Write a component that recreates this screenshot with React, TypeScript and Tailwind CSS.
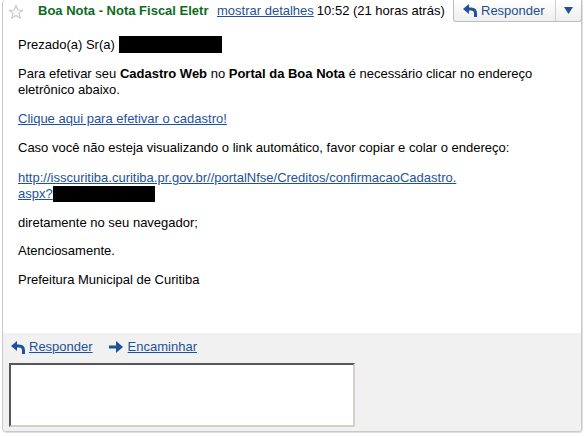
import React from "react";

const ReplyIcon = () => (
  <svg width="14" height="13" viewBox="0 0 14 13" className="shrink-0">
    <polygon points="0,5 6,0 6,10" fill="#1d5298" />
    <path d="M5 5 H8 Q12.5 5 12.5 9.5 V13" stroke="#1d5298" strokeWidth="3" fill="none" />
  </svg>
);

const ForwardIcon = () => (
  <svg width="14" height="12" viewBox="0 0 14 12" className="shrink-0">
    <path d="M0 6 H9" stroke="#1d5298" strokeWidth="3" fill="none" />
    <polygon points="7,0 14,6 7,12" fill="#1d5298" />
  </svg>
);

const Star = () => (
  <svg width="16" height="16" viewBox="0 0 24 24" className="shrink-0">
    <polygon
      points="12,2 15,9 22,9.3 16.5,14 18.5,21.5 12,17.3 5.5,21.5 7.5,14 2,9.3 9,9"
      fill="#fbfbfb"
      stroke="#c6c6c6"
      strokeWidth="1.6"
      strokeLinejoin="round"
    />
  </svg>
);

export default function App() {
  const font = { fontFamily: '"Liberation Sans", Arial, sans-serif' };
  return (
    <div className="w-[584px] h-[436px] bg-white relative overflow-hidden text-[13px] text-black" style={font}>
      <div className="ml-[2px] w-[580px] h-[432px] flex flex-col border-l border-r border-b border-[#c9c9c9] rounded-bl-[4px] rounded-br-[4px] rounded-tl-[4px] shadow-[1px_1px_0_#e0e0e0]">
        {/* header */}
        <div className="h-[22px] flex items-center relative">
          <div className="pl-[5px] pt-[1px]">
            <Star />
          </div>
          <div className="ml-[14px] w-[171px] overflow-hidden whitespace-nowrap font-bold text-[#0c6b1d] leading-[16px]">
            Boa Nota - Nota Fiscal Eletrônica
          </div>
          <a className="ml-[8px] text-[#1d5298] underline leading-[16px] whitespace-nowrap">mostrar detalhes</a>
          <span className="ml-[3px] whitespace-nowrap leading-[16px]">10:52 (21 horas atrás)</span>
          <div className="absolute right-[-1px] top-0 h-[22px] w-[129px] flex border border-t-0 border-[#bdbdbd] rounded-b-[3px] bg-gradient-to-b from-white to-[#eeeeee]">
            <div className="flex-1 flex items-center pl-[9px] gap-[4px] text-[#1d4f8f] border-r border-[#cfcfcf]">
              <ReplyIcon />
              <span className="leading-[16px]">Responder</span>
            </div>
            <div className="w-[25px] flex items-center justify-center">
              <svg width="9" height="7" viewBox="0 0 9 7">
                <polygon points="0,0 9,0 4.5,7" fill="#1d5298" />
              </svg>
            </div>
          </div>
        </div>
        {/* body */}
        <div className="flex-1 pl-[15px] pt-[14px] leading-[16px]">
          <p className="flex items-center">
            Prezado(a) Sr(a)<span className="ml-[4px] inline-block w-[103px] h-[17px] bg-black"></span>
          </p>
          <p className="mt-[13px] pr-[20px]">
            Para efetivar seu <b>Cadastro Web</b> no <b>Portal da Boa Nota</b> é necessário clicar no endereço eletrônico abaixo.
          </p>
          <p className="mt-[13px]">
            <a className="text-[#1d5298] underline">Clique aqui para efetivar o cadastro!</a>
          </p>
          <p className="mt-[13px]">Caso você não esteja visualizando o link automático, favor copiar e colar o endereço:</p>
          <p className="mt-[14px]">
            <a className="text-[#1d5298] underline">http://isscuritiba.curitiba.pr.gov.br//portalNfse/Creditos/confirmacaoCadastro.</a>
            <br />
            <span className="flex items-center">
              <a className="text-[#1d5298] underline">aspx?</a>
              <span className="inline-block w-[102px] h-[16px] bg-black"></span>
            </span>
          </p>
          <p className="mt-[13px]">diretamente no seu navegador;</p>
          <p className="mt-[12px]">Atenciosamente.</p>
          <p className="mt-[13px]">Prefeitura Municipal de Curitiba</p>
        </div>
        {/* footer */}
        <div className="h-[98px] bg-[#f1f1f1] rounded-b-[4px] pl-[6px] pt-[6px]">
          <div className="flex items-center h-[16px] leading-[16px]">
            <span className="ml-[2px]"><ReplyIcon /></span>
            <a className="ml-[4px] text-[#1d5298] underline">Responder</a>
            <span className="ml-[16px]"><ForwardIcon /></span>
            <a className="ml-[5px] text-[#1d5298] underline">Encaminhar</a>
          </div>
          <div className="mt-[8px] w-[346px] h-[64px] bg-white border-2 border-t-[#555555] border-l-[#555555] border-b-[#d4d0c8] border-r-[#d4d0c8]"></div>
        </div>
      </div>
    </div>
  );
}
